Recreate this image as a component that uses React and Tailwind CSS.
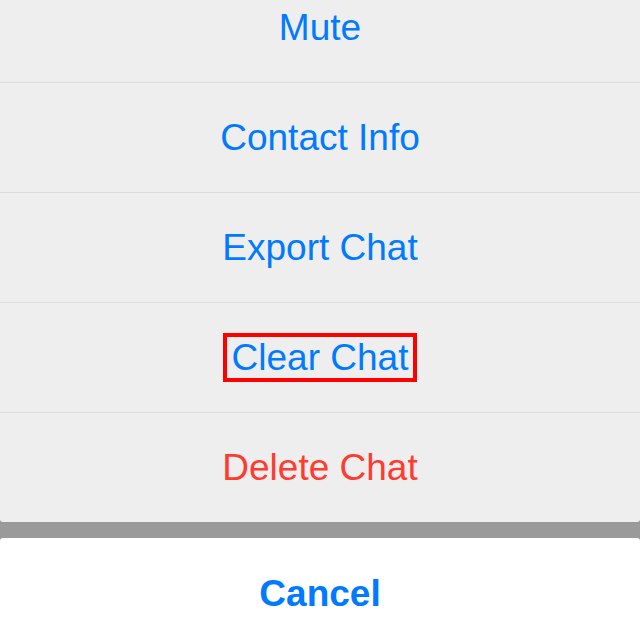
import React from 'react';

const rows = [
  { label: 'Mute' },
  { label: 'Contact Info' },
  { label: 'Export Chat' },
  { label: 'Clear Chat', highlight: true },
  { label: 'Delete Chat', danger: true },
];

export default function App() {
  return (
    <div
      className="w-[640px] h-[618px] overflow-hidden bg-[#9a9a9a] flex flex-col"
      style={{ fontFamily: '"Liberation Sans", Arial, sans-serif' }}
    >
      {/* Action group, first row cut off by the top edge */}
      <div className="-mt-[28px] bg-[#eeeeee] rounded-b-[3px] flex flex-col">
        {rows.map((row, i) => (
          <div
            key={row.label}
            className={`h-[110px] flex items-center justify-center ${i > 0 ? 'border-t border-[#dcdcdc]' : ''}`}
          >
            <span
              className={`text-[37px] leading-none ${row.danger ? 'text-[#ff3b30]' : 'text-[#007aff]'} ${
                row.highlight ? 'border-[4px] border-[#ff0000] px-[5px] pt-[2px] pb-[2px]' : ''
              }`}
            >
              {row.label}
            </span>
          </div>
        ))}
      </div>

      {/* Cancel */}
      <div className="mt-[16px] flex-1 bg-white rounded-t-[3px] flex justify-center pt-[37px]">
        <span className="text-[37px] leading-none font-bold text-[#007aff]">Cancel</span>
      </div>
    </div>
  );
}
